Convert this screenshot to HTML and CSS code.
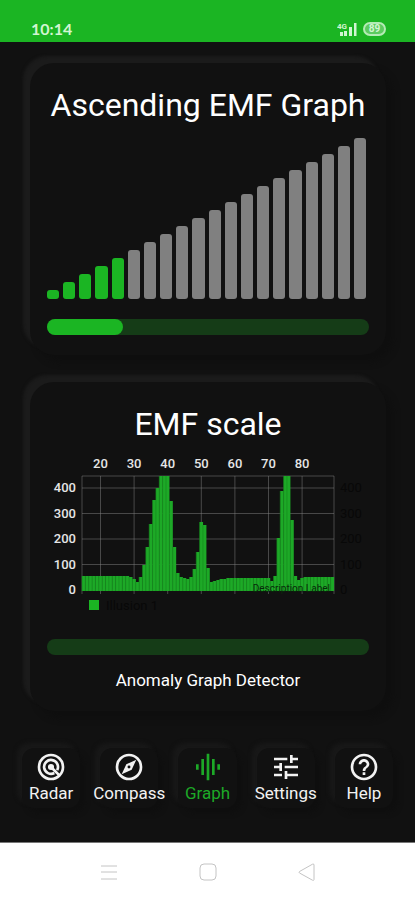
FILE: index.html
```html
<!DOCTYPE html>
<html lang="en">
<head>
<meta charset="utf-8">
<meta name="viewport" content="width=device-width, initial-scale=1">
<title>EMF Graph</title>
<link rel="stylesheet" href="styles.css">
</head>
<body>
<header class="status">
  <span class="clock">10:14</span>
  <span class="indicators">
    <svg class="signal" viewBox="0 0 20 15" aria-hidden="true">
      <text x="0" y="7" class="signal-text">4G</text>
      <path d="M3 10h3v4H3zM7 9h3v5H7zM12 5h3v9h-3zM17 1h2.500v13H17z"/>
    </svg>
    <span class="battery">89</span>
  </span>
</header>

<main class="content">
  <section class="card">
    <h1 class="title">Ascending EMF Graph</h1>
    <div class="steps" id="steps"></div>
    <div class="meter"><div class="meter-fill"></div></div>
  </section>

  <section class="card">
    <h2 class="title">EMF scale</h2>
    <svg class="chart" viewBox="0 0 322 160" role="img" aria-label="EMF scale">
      <g id="grid" class="chart-grid"></g>
      <g id="bars" class="chart-bars"></g>
      <g id="labels" class="chart-labels"></g>
      <text class="chart-note" x="283" y="137">Description Label</text>
      <rect class="chart-key" x="42" y="145" width="10" height="10"/>
      <text class="chart-faint" x="59" y="155">Illusion 1</text>
    </svg>
    <div class="meter meter-low"></div>
    <p class="caption">Anomaly Graph Detector</p>
  </section>
</main>

<nav class="tabs">
  <a class="tab" href="#radar">
    <svg class="icon" viewBox="0 0 24 24" aria-hidden="true"><g class="line"><circle cx="12" cy="12" r="9"/><path d="M14.500 16.500A5.200 5.200 0 1 1 16.600 14.400M12 12l6.300 6.300"/></g><circle cx="12" cy="12" r="2.300"/></svg>
    <span>Radar</span>
  </a>
  <a class="tab" href="#compass">
    <svg class="icon" viewBox="0 0 24 24" aria-hidden="true"><circle class="line" cx="12" cy="12" r="9"/><path fill-rule="evenodd" d="M6.500 17.500l7.510-3.490L17.500 6.500 9.990 9.990zM12 10.900a1.100 1.100 0 1 1 0 2.200 1.100 1.100 0 0 1 0-2.200z"/></svg>
    <span>Compass</span>
  </a>
  <a class="tab tab-active" href="#graph" aria-current="page">
    <svg class="icon" viewBox="0 0 24 24" aria-hidden="true"><path d="M7 18h2V6H7v12zm4 4h2V2h-2v20zm-8-8h2v-4H3v4zm12 4h2V6h-2v12zm4-8v4h2v-4h-2z"/></svg>
    <span>Graph</span>
  </a>
  <a class="tab" href="#settings">
    <svg class="icon" viewBox="0 0 24 24" aria-hidden="true"><path d="M3 17v2h6v-2H3zM3 5v2h10V5H3zm10 16v-2h8v-2h-8v-2h-2v6h2zM7 9v2H3v2h4v2h2V9H7zm14 4v-2H11v2h10zm-6-4h2V7h4V5h-4V3h-2v6z"/></svg>
    <span>Settings</span>
  </a>
  <a class="tab" href="#help">
    <svg class="icon" viewBox="0 0 24 24" aria-hidden="true"><path d="M11 18h2v-2h-2v2zm1-16C6.480 2 2 6.480 2 12s4.480 10 10 10 10-4.480 10-10S17.520 2 12 2zm0 18c-4.410 0-8-3.590-8-8s3.590-8 8-8 8 3.590 8 8-3.590 8-8 8zm0-14c-2.210 0-4 1.790-4 4h2c0-1.100.9-2 2-2s2 .9 2 2c0 2-3 1.750-3 5h2c0-2.250 3-2.500 3-5 0-2.210-1.790-4-4-4z"/></svg>
    <span>Help</span>
  </a>
</nav>

<footer class="system">
  <button class="key" type="button" aria-label="Recent apps"><svg viewBox="0 0 20 20"><path d="M2 4h16M2 10h16M2 17h16"/></svg></button>
  <button class="key" type="button" aria-label="Home"><svg viewBox="0 0 20 20"><rect x="2" y="2" width="16" height="16" rx="4"/></svg></button>
  <button class="key" type="button" aria-label="Back"><svg viewBox="0 0 20 20"><path d="M17 3v14.500a1 1 0 0 1-1.500.7L2.500 11a1 1 0 0 1 0-1.500L15.500 2.200A1 1 0 0 1 17 3z"/></svg></button>
</footer>
<script src="app.js"></script>
</body>
</html>
```
FILE: styles.css
```css
* { box-sizing: border-box; }

body {
  margin: 0;
  min-height: 100vh;
  display: flex;
  flex-direction: column;
  background: #111;
  color: #fff;
  font-family: Roboto, "Liberation Sans", sans-serif;
}

.status {
  display: flex;
  justify-content: space-between;
  align-items: flex-end;
  height: 42px;
  padding: 0 29px 4px 31px;
  background: #1bb523;
  color: #d2f5d2;
}

.clock {
  font-family: Lato, sans-serif;
  font-size: 16px;
  font-weight: 700;
  line-height: 18px;
}

.indicators {
  display: flex;
  align-items: center;
  gap: 6px;
  height: 18px;
}

.signal { width: 20px; height: 15px; fill: currentColor; }
.signal-text { font-size: 8px; font-weight: 700; }

.battery {
  width: 23px;
  height: 14px;
  border: 2px solid #b4ebb5;
  border-radius: 7px;
  background: #5ccb60;
  font-size: 10px;
  font-weight: 700;
  line-height: 10px;
  text-align: center;
}

.content {
  display: flex;
  flex-direction: column;
  gap: 27px;
  padding: 21px 29px 0 30px;
}

.card {
  padding: 21px 17px 20px;
  border-radius: 24px;
  background: #111;
  box-shadow: -7px -7px 3px #1b1b1b, 7px 7px 6px #0f0f0f;
}

.title {
  margin: 0;
  font-size: 32px;
  font-weight: 400;
  line-height: 42px;
  text-align: center;
  white-space: nowrap;
}

.steps {
  display: flex;
  align-items: flex-end;
  gap: 4px;
  height: 162px;
  margin: 11px 3px 20px 0;
}

.step {
  flex: 1;
  border-radius: 3px;
  background: #808080;
}

.step-on { background: #1bb523; }

.meter {
  height: 16px;
  border-radius: 8px;
  background: #153c17;
}

.meter-fill {
  width: 23.5%;
  height: 100%;
  border-radius: 8px;
  background: #1bb523;
}

.chart {
  display: block;
  width: 100%;
  margin-top: 10px;
  font-size: 13px;
}

.chart-bars { fill: #1da927; }
.chart-bars path { stroke: #15831c; stroke-width: 1; fill: none; }
.chart-grid { stroke: #808080; stroke-opacity: 0.5; }
.chart-labels { fill: #e6e6e6; font-weight: 500; }
.chart-labels .top { text-anchor: middle; }
.chart-labels .left { text-anchor: end; }
.chart-labels .right, .chart-faint { fill: #080808; font-weight: 400; }
.chart-note { fill: #08290a; font-size: 10px; text-anchor: end; }
.chart-key { fill: #1bb523; }

.meter-low { margin-top: 24px; }

.caption {
  margin: 14px 0 0;
  font-size: 17px;
  line-height: 22px;
  text-align: center;
}

.tabs {
  display: flex;
  justify-content: space-between;
  gap: 20px;
  margin-top: auto;
  padding: 0 22px 34px;
}

.tab {
  flex: 1;
  min-width: 0;
  height: 60px;
  padding-top: 3px;
  display: flex;
  flex-direction: column;
  align-items: center;
  border-radius: 12px;
  box-shadow: -5px -5px 4px #181818, 5px 5px 5px #0f0f0f;
  background: #111;
  color: #f2f2f2;
  font-size: 17px;
  line-height: 20px;
  text-decoration: none;
}

.tab-active { color: #1da927; }

.icon { width: 32px; height: 32px; flex: none; fill: currentColor; }
.line { fill: none; stroke: currentColor; stroke-width: 2; }

.system {
  display: flex;
  justify-content: center;
  gap: 79px;
  height: 58px;
  padding-top: 19px;
  border-top: 1px solid #777;
  background: #fff;
}

.key {
  width: 20px;
  height: 20px;
  padding: 0;
  border: 0;
  background: none;
}

.key svg {
  display: block;
  width: 20px;
  height: 20px;
  fill: none;
  stroke: #c4c4c4;
  stroke-width: 1;
}
```
FILE: app.js
```js
const steps = document.getElementById("steps");
for (let i = 0; i < 20; i++) {
  const bar = document.createElement("div");
  bar.className = i < 5 ? "step step-on" : "step";
  bar.style.height = 9 + i * 8 + "px";
  steps.append(bar);
}

const NS = "http://www.w3.org/2000/svg";
function add(parent, tag, attrs, text) {
  const el = document.createElementNS(NS, tag);
  for (const name in attrs) el.setAttribute(name, attrs[name]);
  if (text !== undefined) el.textContent = text;
  document.getElementById(parent).append(el);
}

const plot = { left: 35, right: 287, top: 21, base: 135 };
const column = (plot.right - plot.left) / 75;
const heights = [
  ...Array(14).fill(14), 13, 11, 8, 13, 25, 43, 66, 90, 102, 114, 114, 114,
  89, 43, 17, 13, 12, 11, 13, 21, 38, 68, 65, 22, 8, 9, 10, 11, 11,
  ...Array(13).fill(12), 9, 14, 52, 99, 114, 114, 70, 14, 10, 12,
  ...Array(9).fill(13)
];
heights.forEach((h, i) => {
  const x = plot.left + i * column;
  add("bars", "rect", { x, y: plot.base - h, width: column + 0.1, height: h + 1 });
  add("bars", "path", { d: `M${x} ${plot.base - h}V${plot.base + 1}`, opacity: 0.6 });
});

[400, 300, 200, 100, 0].forEach((value) => {
  const y = plot.base - value * 0.255;
  add("grid", "path", { d: `M${plot.left} ${y}H${plot.right}` });
  add("labels", "text", { class: "left", x: 29, y: y + 4 }, value);
  add("labels", "text", { class: "right", x: 293, y: y + 4 }, value);
});
[20, 30, 40, 50, 60, 70, 80].forEach((value, i) => {
  const x = 53.5 + i * 33.6;
  add("grid", "path", { d: `M${x} ${plot.top}V${plot.base + 4}` });
  add("labels", "text", { class: "top", x, y: 13 }, value);
});
add("grid", "path", { d: `M${plot.left} ${plot.base + 4}V${plot.top}H${plot.right}V${plot.base + 4}`, fill: "none" });
```
